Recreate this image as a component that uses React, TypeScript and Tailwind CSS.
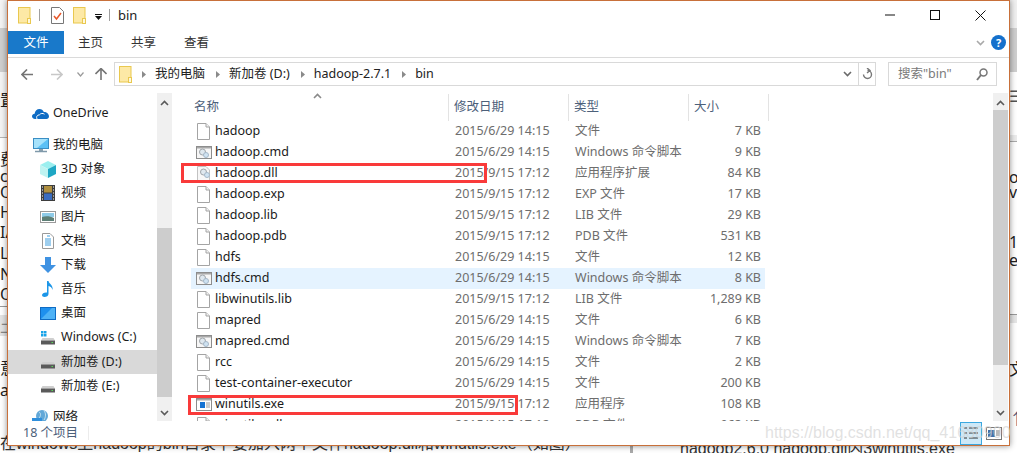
import type { ReactNode } from "react";

const files = [
  { name: "hadoop", date: "2015/6/29 14:15", type: "文件", size: "7 KB", icon: "file" },
  { name: "hadoop.cmd", date: "2015/6/29 14:15", type: "Windows 命令脚本", size: "9 KB", icon: "cmd" },
  { name: "hadoop.dll", date: "2015/9/15 17:12", type: "应用程序扩展", size: "84 KB", icon: "dll" },
  { name: "hadoop.exp", date: "2015/9/15 17:12", type: "EXP 文件", size: "17 KB", icon: "file" },
  { name: "hadoop.lib", date: "2015/9/15 17:12", type: "LIB 文件", size: "29 KB", icon: "file" },
  { name: "hadoop.pdb", date: "2015/9/15 17:12", type: "PDB 文件", size: "531 KB", icon: "file" },
  { name: "hdfs", date: "2015/6/29 14:15", type: "文件", size: "12 KB", icon: "file" },
  { name: "hdfs.cmd", date: "2015/6/29 14:15", type: "Windows 命令脚本", size: "8 KB", icon: "cmd" },
  { name: "libwinutils.lib", date: "2015/9/15 17:12", type: "LIB 文件", size: "1,289 KB", icon: "file" },
  { name: "mapred", date: "2015/6/29 14:15", type: "文件", size: "6 KB", icon: "file" },
  { name: "mapred.cmd", date: "2015/6/29 14:15", type: "Windows 命令脚本", size: "7 KB", icon: "cmd" },
  { name: "rcc", date: "2015/6/29 14:15", type: "文件", size: "2 KB", icon: "file" },
  { name: "test-container-executor", date: "2015/6/29 14:15", type: "文件", size: "200 KB", icon: "file" },
  { name: "winutils.exe", date: "2015/9/15 17:12", type: "应用程序", size: "108 KB", icon: "exe" },
  { name: "winutils.pdb", date: "2015/9/15 17:12", type: "PDB 文件", size: "963 KB", icon: "file" },
];

const leftStrip = [
  { h: 28, text: "", cls: "bg-[#f4f4f4]" },
  { h: 44, text: "", cls: "bg-[#cfcfcf]" },
  { h: 20, text: "", cls: "bg-[#f4f4f4]" },
  { h: 45, text: "置", cls: "bg-[#f4f4f4] items-start" },
  { h: 1, text: "", cls: "bg-[#b5b5b5]" },
  { h: 10, text: "", cls: "bg-white" },
  { h: 21, text: "费", cls: "" },
  { h: 13, text: "cc", cls: "" },
  { h: 20, text: "O", cls: "" },
  { h: 20, text: "H.", cls: "" },
  { h: 20, text: "IA", cls: "" },
  { h: 22, text: "LN", cls: "" },
  { h: 20, text: "N", cls: "" },
  { h: 20, text: "O", cls: "" },
  { h: 2, text: "", cls: "" },
  { h: 1, text: "", cls: "bg-[#9a9a9a]" },
  { h: 8, text: "", cls: "bg-white" },
  { h: 21, text: "土", cls: "bg-[#e3e3e3] text-[#888]" },
  { h: 22, text: "", cls: "" },
  { h: 20, text: "意", cls: "" },
  { h: 24, text: "ac", cls: "" },
  { h: 45, text: "", cls: "" },
];

const rightStrip = [
  { h: 28, text: "", cls: "bg-[#f0f0f0]" },
  { h: 44, text: "", cls: "bg-[#cfcfcf]" },
  { h: 15, text: "", cls: "" },
  { h: 18, text: "☰", cls: "text-[#555]" },
  { h: 30, text: "", cls: "" },
  { h: 6, text: "", cls: "bg-[#ececec]" },
  { h: 1, text: "", cls: "bg-[#aaa]" },
  { h: 28, text: "", cls: "" },
  { h: 14, text: "o", cls: "" },
  { h: 16, text: "v", cls: "" },
  { h: 34, text: "", cls: "" },
  { h: 16, text: "1.", cls: "" },
  { h: 20, text: "e", cls: "" },
  { h: 44, text: "", cls: "" },
  { h: 1, text: "", cls: "bg-[#999]" },
  { h: 8, text: "", cls: "bg-[#e6e6e6]" },
  { h: 36, text: "", cls: "" },
  { h: 20, text: "文", cls: "" },
  { h: 30, text: "", cls: "" },
  { h: 20, text: "↑", cls: "text-[#557]" },
];

function Folder() {
  return (
    <svg width="13" height="17" viewBox="0 0 13 17" className="shrink-0">
      <rect x="0.5" y="0.5" width="11.5" height="15.5" fill="#fde9a6" stroke="#e9c84f" />
      <rect x="9.5" y="11.5" width="3" height="5" fill="#fff8dc" stroke="#e9c84f" />
    </svg>
  );
}

function CheckDoc() {
  return (
    <svg width="13" height="17" viewBox="0 0 13 17" className="shrink-0">
      <path d="M0.5 0.5H8.5L12.5 4.5V16.5H0.5Z" fill="#fff" stroke="#777" />
      <path d="M3 9L5.5 12L10 6" fill="none" stroke="#e8582a" strokeWidth="1.5" />
    </svg>
  );
}

function PlainFile() {
  return (
    <svg width="13" height="17" viewBox="0 0 13 17" className="shrink-0">
      <path d="M0.5 0.5H9L12.5 4V16.5H0.5Z" fill="#fff" stroke="#a4a4a4" />
      <path d="M9 0.5V4H12.5" fill="#f2f2f2" stroke="#a4a4a4" />
    </svg>
  );
}

function Gears() {
  return (
    <g fill="#dfe8ef" stroke="#a0a5aa" strokeWidth="1">
      <circle cx="6.5" cy="6" r="3" />
      <circle cx="10" cy="9" r="2.5" fill="#cfe3f2" stroke="#a5b8c8" />
    </g>
  );
}

function CmdFile() {
  return (
    <svg width="16" height="13" viewBox="0 0 16 13" className="shrink-0">
      <rect x="0.5" y="0.5" width="15" height="12" fill="#f6f6f6" stroke="#8d8d8d" />
      <rect x="1" y="1" width="14" height="1.5" fill="#a8a8a8" />
      <Gears />
    </svg>
  );
}

function DllFile() {
  return (
    <svg width="13" height="15" viewBox="0 0 13 15" className="shrink-0">
      <path d="M0.5 0.5H9L12.5 4V14.5H0.5Z" fill="#f7f7f7" stroke="#c2c2c2" />
      <Gears />
    </svg>
  );
}

function ExeFile() {
  return (
    <svg width="16" height="13" viewBox="0 0 16 13" className="shrink-0">
      <rect x="0.5" y="0.5" width="15" height="12" fill="#fff" stroke="#8d8d8d" />
      <rect x="1" y="1" width="14" height="1.5" fill="#a8a8a8" />
      <rect x="4" y="4" width="5" height="6" fill="#1573d3" />
      <path d="M10 5H14M10 7H14M10 9H14" stroke="#9a9a9a" />
    </svg>
  );
}

function FileIcon({ kind }: { kind: string }) {
  if (kind === "cmd") return <CmdFile />;
  if (kind === "dll") return <DllFile />;
  if (kind === "exe") return <ExeFile />;
  return <PlainFile />;
}

function Cloud() {
  return (
    <svg width="17" height="11" viewBox="0 0 17 11">
      <path d="M3 11C1 11 0 9.5 0 8.300C0 6.800 1.200 5.800 2.600 5.800C3 3 5 1 7.500 1C9.500 1 11 2.200 11.800 4C14.500 3.800 17 6 17 8.300C17 10 15.800 11 14.500 11Z" fill="#0f6cc4" />
      <path d="M5 11C4 9 5 6.800 7.500 6.800C8.500 5.200 11 5 12.500 6.200" fill="none" stroke="#fff" />
    </svg>
  );
}

function Monitor() {
  return (
    <svg width="16" height="15" viewBox="0 0 16 15">
      <rect x="0.5" y="0.5" width="15" height="10" fill="#5cc0f5" stroke="#3a8ec4" />
      <path d="M1 1H15L4 10H1Z" fill="#a6e2fb" />
      <path d="M6 11H10V13H6Z" fill="#8ba0ad" />
      <path d="M2 13.500H14" stroke="#7f99aa" strokeWidth="1.500" />
    </svg>
  );
}

function Cube() {
  return (
    <svg width="16" height="17" viewBox="0 0 16 17">
      <path d="M8 0L16 4L8 8L0 4Z" fill="#9befef" />
      <path d="M0 4L8 8V17L0 13Z" fill="#bff3f1" />
      <path d="M16 4L8 8V17L16 13Z" fill="#1fa7c4" />
    </svg>
  );
}

function Film() {
  return (
    <svg width="14" height="16" viewBox="0 0 14 16">
      <rect width="14" height="16" fill="#3d3d3d" />
      <rect x="3" y="1" width="8" height="6.500" fill="#b09040" />
      <rect x="3" y="8.500" width="8" height="6.500" fill="#3a6cc0" />
      <path d="M1 2H2M1 5H2M1 8H2M1 11H2M1 14H2M12 2H13M12 5H13M12 8H13M12 11H13M12 14H13" stroke="#fff" />
    </svg>
  );
}

function Picture() {
  return (
    <svg width="16" height="12" viewBox="0 0 16 12">
      <rect x="0.5" y="0.5" width="15" height="11" fill="#fff" stroke="#9a9a9a" />
      <rect x="2" y="2" width="12" height="4" fill="#8ecbe8" />
      <path d="M2 6C6 4.500 10 5 14 7V10H2Z" fill="#5d7f76" />
    </svg>
  );
}

function Doc() {
  return (
    <svg width="12" height="16" viewBox="0 0 12 16">
      <path d="M0.5 0.500H8L11.500 4V15.500H0.500Z" fill="#fff" stroke="#9a9a9a" />
      <path d="M5 3H8M3 6H9M3 8H9M3 10H9M3 12H9" stroke="#3f9ede" />
    </svg>
  );
}

function DownArrow() {
  return (
    <svg width="16" height="16" viewBox="0 0 16 16">
      <path d="M5 0H11V8H16L8 16L0 8H5Z" fill="#3f92e2" />
    </svg>
  );
}

function Music() {
  return (
    <svg width="12" height="16" viewBox="0 0 12 16">
      <path d="M5 0H6.500C7 3 11.500 4 10.500 9C10 6.500 8.500 5.500 6.500 5V13C6.500 15 4.500 16 2.500 16C1 16 0 15 0 14C0 12.500 2.500 11 5 11.500Z" fill="#1c96e8" />
    </svg>
  );
}

function Desktop() {
  return (
    <svg width="16" height="13" viewBox="0 0 16 13">
      <rect x="0.5" y="0.5" width="15" height="12" fill="#1e90ee" stroke="#0f6cc4" />
      <path d="M1 12L12 1H15V12Z" fill="#4eb2f6" />
    </svg>
  );
}

function Drive({ windows }: { windows?: boolean }) {
  return (
    <svg width="14" height="14" viewBox="0 0 14 14">
      {windows && <path d="M0 0H2.500V2.500H0ZM3 0H5.500V2.500H3ZM0 3H2.500V5.500H0ZM3 3H5.500V5.500H3Z" fill="#18a3e8" />}
      <path d="M1.500 7H12.500L14 9.500H0Z" fill="#cfcfcf" />
      <rect y="9.500" width="14" height="4" fill="#5a5a5a" />
      <rect x="10.500" y="11" width="1.500" height="1" fill="#57d957" />
    </svg>
  );
}

function Globe() {
  return (
    <svg width="17" height="15" viewBox="0 0 17 15">
      <circle cx="10" cy="6" r="6" fill="#62a8d8" />
      <path d="M7 2C9 3 9 6 7 8M12 1C14 3 14 7 12 10" stroke="#c6e3f2" fill="none" />
      <rect y="8" width="10" height="7" fill="#2f8fdc" />
    </svg>
  );
}

function Chevron({ up, color = "#5a5a5a" }: { up?: boolean; color?: string }) {
  return (
    <svg width="9" height="6" viewBox="0 0 9 6">
      <path d={up ? "M1 5L4.500 1.500L8 5" : "M1 1L4.500 4.500L8 1"} fill="none" stroke={color} strokeWidth="1.600" />
    </svg>
  );
}

function Crumb() {
  return (
    <svg width="4" height="7" viewBox="0 0 4 7" className="ml-[11px] mr-[9px] shrink-0">
      <path d="M0 0L4 3.500L0 7Z" fill="#8a8a8a" />
    </svg>
  );
}

function ScrollBar({ thumbTop, thumbH, width }: { thumbTop: number; thumbH: number; width: string }) {
  return (
    <div className={`flex h-full shrink-0 flex-col bg-[#f0f0f0] ${width}`}>
      <div className="flex h-[17px] shrink-0 items-center justify-center pt-[2px]">
        <Chevron up />
      </div>
      <div className="relative flex-1">
        <div className="absolute inset-x-0 bg-[#cdcdcd]" style={{ top: thumbTop, height: thumbH }} />
      </div>
      <div className="flex h-[17px] shrink-0 items-center justify-center">
        <Chevron />
      </div>
    </div>
  );
}

function NavItem({ icon, label, indent, selected, h = "h-6" }: { icon: ReactNode; label: string; indent?: boolean; selected?: boolean; h?: string }) {
  return (
    <div className={`flex shrink-0 items-center ${h} ${selected ? "bg-[#d9d9d9]" : ""} ${indent ? "pl-[32px]" : "pl-[24px]"}`}>
      <span className={`flex h-full items-center justify-center ${indent ? "w-[16px]" : "w-[17px]"}`}>{icon}</span>
      <span className={`whitespace-nowrap text-[#1c1c1c] ${indent ? "ml-[5px]" : "ml-[4px]"}`}>{label}</span>
    </div>
  );
}

function Strip({ rows }: { rows: { h: number; text: string; cls: string }[] }) {
  return (
    <div className="w-[8px] overflow-hidden bg-white text-[16px] leading-none text-[#222]">
      {rows.map((r, i) => (
        <div key={i} className={`flex items-center overflow-hidden whitespace-nowrap ${r.cls}`} style={{ height: r.h }}>
          {r.text}
        </div>
      ))}
    </div>
  );
}

export default function App() {
  return (
    <div className="relative flex h-[453px] w-[1017px] justify-between overflow-hidden bg-white font-['Noto_Sans','Noto_Sans_CJK_SC',sans-serif] text-[12.5px] leading-none">
      <Strip rows={leftStrip} />
      <Strip rows={rightStrip} />

      {/* page text behind the window */}
      <div className="absolute bottom-[-1px] left-0 whitespace-nowrap font-['Liberation_Sans','Noto_Sans_CJK_SC',sans-serif] text-[16px] leading-[20px] text-[#333]">
        在windows上hadoop的bin目录下要加入两个文件hadoop.dll和winutils.exe（如图）
      </div>
      <div className="absolute bottom-[-6px] left-[680px] whitespace-nowrap font-['Liberation_Sans','Noto_Sans_CJK_SC',sans-serif] text-[16px] leading-[20px] text-[#333]">
        hadoop2.6.0 hadoop.dll内3winutils.exe
      </div>
      <div className="absolute bottom-0 left-[630px] h-[8px] w-[3px] bg-[#aaa]" />

      {/* explorer window */}
      <div className="absolute left-[7px] top-0 flex h-[446px] w-[1003px] flex-col border border-[#c8703a] bg-white shadow-[0_0_6px_rgba(0,0,0,0.45)]">
        {/* title bar */}
        <div className="flex h-[30px] shrink-0 items-center pb-[2px] pl-[10px]">
          <Folder />
          <div className="ml-[8px] h-[12px] w-px bg-[#a0a0a0]" />
          <div className="ml-[11px]"><CheckDoc /></div>
          <div className="ml-[9px]"><Folder /></div>
          <svg width="7" height="6" viewBox="0 0 7 6" className="ml-[9px] mt-[3px]">
            <path d="M0 2H7L3.500 6Z" fill="#111" />
            <rect width="7" height="1" fill="#111" />
          </svg>
          <div className="ml-[7px] h-[12px] w-px bg-[#a0a0a0]" />
          <span className="ml-[8px] text-[13px] text-[#222]">bin</span>
          <div className="ml-auto flex items-center">
            <svg width="10" height="2" viewBox="0 0 10 2" className="mr-[35px]"><rect width="10" height="1" y="0.500" fill="#111" /></svg>
            <svg width="10" height="10" viewBox="0 0 10 10" className="mr-[35px]"><rect x="0.500" y="0.500" width="9" height="9" fill="none" stroke="#111" /></svg>
            <svg width="11" height="11" viewBox="0 0 11 11" className="mr-[23px]"><path d="M0.500 0.500L10.500 10.500M10.500 0.500L0.500 10.500" stroke="#111" /></svg>
          </div>
        </div>

        {/* ribbon tabs */}
        <div className="flex h-[23px] shrink-0 items-center text-[#333]">
          <div className="flex h-full w-[56px] items-center justify-center bg-[#1979ca] pt-[1px] text-white">文件</div>
          <span className="ml-[14px] pt-[2px]">主页</span>
          <span className="ml-[28px] pt-[2px]">共享</span>
          <span className="ml-[28px] pt-[2px]">查看</span>
          <div className="ml-auto mr-[3px] flex items-center gap-[6px]">
            <Chevron color="#a9a9a9" />
            <div className="flex h-[15px] w-[15px] items-center justify-center rounded-full bg-[#1470cc] text-[11px] font-bold text-white">?</div>
          </div>
        </div>
        <div className="mt-[3px] h-px shrink-0 bg-[#dadada]" />

        {/* address row */}
        <div className="flex h-[32px] shrink-0 items-center">
          <svg width="12" height="11" viewBox="0 0 12 11" className="ml-[13px]"><path d="M6 0.500L1 5.500L6 10.500M1 5.500H12" fill="none" stroke="#757575" strokeWidth="1.600" /></svg>
          <svg width="12" height="11" viewBox="0 0 12 11" className="ml-[18px]"><path d="M6 0.500L11 5.500L6 10.500M11 5.500H0" fill="none" stroke="#c8c8c8" strokeWidth="1.600" /></svg>
          <svg width="7" height="5" viewBox="0 0 7 5" className="ml-[14px]"><path d="M0.500 0.500L3.500 4L6.500 0.500" fill="none" stroke="#9a9a9a" strokeWidth="1.200" /></svg>
          <svg width="12" height="12" viewBox="0 0 12 12" className="ml-[11px]"><path d="M0.500 6L6 0.500L11.500 6M6 0.500V12" fill="none" stroke="#757575" strokeWidth="1.600" /></svg>
          <div className="ml-[7px] flex h-[24px] w-[762px] items-center border border-[#d9d9d9] text-[#222]">
            <div className="ml-[4px]"><Folder /></div>
            <svg width="4" height="7" viewBox="0 0 4 7" className="ml-[10px] mr-[9px] shrink-0"><path d="M0 0L4 3.500L0 7Z" fill="#8a8a8a" /></svg>
            <span>我的电脑</span>
            <Crumb />
            <span>新加卷 (D:)</span>
            <Crumb />
            <span>hadoop-2.7.1</span>
            <Crumb />
            <span>bin</span>
            <div className="ml-auto mr-[3px]"><Chevron color="#6a6a6a" /></div>
            <div className="ml-[3px] flex h-full w-[17px] items-center justify-center border-l border-[#d9d9d9]">
              <svg width="11" height="12" viewBox="0 0 11 12"><path d="M5.500 2.500A4 4 0 1 1 1.500 6.500M5 0L8 2.500L5 5" fill="none" stroke="#777" strokeWidth="1.400" /></svg>
            </div>
          </div>
          <div className="ml-[12px] flex h-[24px] w-[109px] items-center justify-between border border-[#d9d9d9] pl-[9px] pr-[8px] text-[#7a7a7a]">
            <span>搜索"bin"</span>
            <svg width="12" height="13" viewBox="0 0 12 13"><circle cx="7.500" cy="4.500" r="3.500" fill="none" stroke="#777" strokeWidth="1.500" /><path d="M5 7L1 12" stroke="#777" strokeWidth="2" /></svg>
          </div>
        </div>

        {/* body */}
        <div className="flex h-[331px] shrink-0 pt-[3px]">
          <div className="flex w-[149px] shrink-0 flex-col overflow-hidden pt-[8px]">
            <NavItem icon={<Cloud />} label="OneDrive" />
            <div className="h-[8px] shrink-0" />
            <NavItem icon={<Monitor />} label="我的电脑" />
            <NavItem icon={<Cube />} label="3D 对象" indent />
            <NavItem icon={<Film />} label="视频" indent />
            <NavItem icon={<Picture />} label="图片" indent />
            <NavItem icon={<Doc />} label="文档" indent />
            <NavItem icon={<DownArrow />} label="下载" indent />
            <NavItem icon={<Music />} label="音乐" indent />
            <NavItem icon={<Desktop />} label="桌面" indent />
            <NavItem icon={<Drive windows />} label="Windows (C:)" indent h="h-[25px]" />
            <NavItem icon={<Drive />} label="新加卷 (D:)" indent selected />
            <NavItem icon={<Drive />} label="新加卷 (E:)" indent />
            <div className="h-[7px] shrink-0" />
            <NavItem icon={<Globe />} label="网络" />
          </div>
          <ScrollBar width="w-[15px]" thumbTop={118} thumbH={169} />

          <div className="relative ml-[3px] flex min-w-0 flex-1 flex-col overflow-hidden pt-[1px]">
            <div className="absolute left-[138px] top-[0px]"><Chevron up color="#8a8a8a" /></div>
            <div className="flex h-[27px] shrink-0 items-center text-[#4c607a]">
              <div className="flex h-full w-[274px] items-center border-r border-[#e3e3e3] pl-[19px]">名称</div>
              <div className="flex h-full w-[120px] items-center border-r border-[#e3e3e3] pl-[5px]">修改日期</div>
              <div className="flex h-full w-[120px] items-center border-r border-[#e3e3e3] pl-[5px]">类型</div>
              <div className="flex h-full w-[80px] items-center border-r border-[#e3e3e3] pl-[5px]">大小</div>
            </div>
            <div className="ml-[16px] flex flex-col">
              {files.map((f) => (
                <div key={f.name} className={`flex h-[21px] w-[574px] shrink-0 items-center ${f.name === "hdfs.cmd" ? "bg-[#e5f3ff]" : ""}`}>
                  <div className="flex w-[24px] justify-center pl-[1px]"><FileIcon kind={f.icon} /></div>
                  <div className="w-[240px] whitespace-nowrap text-[#1a1a1a]">{f.name}</div>
                  <div className="w-[120px] whitespace-nowrap text-[#6d6d6d]">{f.date}</div>
                  <div className="w-[120px] whitespace-nowrap text-[#6d6d6d]">{f.type}</div>
                  <div className="w-[66px] whitespace-nowrap text-right text-[#6d6d6d]">{f.size}</div>
                </div>
              ))}
            </div>
          </div>
          <ScrollBar width="w-[15px]" thumbTop={0} thumbH={255} />
          <div className="w-px shrink-0" />
        </div>

        {/* status bar */}
        <div className="flex flex-1 items-center pl-[15px] text-[#4c607a]">
          <span>18 个项目</span>
          <div className="ml-[10px] h-[14px] w-px bg-[#ececec]" />
          <div className="ml-auto mr-[5px] flex items-center gap-[2px]">
            <div className="flex h-[23px] w-[22px] items-center justify-center border border-[#3ba8e0] bg-[#cde8f7]">
              <svg width="14" height="12" viewBox="0 0 14 12"><path d="M0 1H3M0 6H3M0 11H3M5 1H14M5 6H14M5 11H14" stroke="#333" /></svg>
            </div>
            <div className="flex h-[23px] w-[20px] items-center justify-center">
              <svg width="16" height="13" viewBox="0 0 16 13"><rect x="0.500" y="0.500" width="15" height="12" fill="#fff" stroke="#777" /><rect x="2" y="3" width="7" height="7" fill="#3f6fa8" /><path d="M10 4H14M10 6H14M10 8H14" stroke="#777" /></svg>
            </div>
          </div>
        </div>
      </div>

      {/* red annotation boxes */}
      <div className="absolute left-[181px] top-[163px] h-[20px] w-[306px] border-[3px] border-[#f93a3a]" />
      <div className="absolute left-[188px] top-[395px] h-[20px] w-[330px] border-[3px] border-[#f93a3a]" />
      <div className="absolute left-[765px] top-[421px] whitespace-nowrap font-['Liberation_Sans',sans-serif] text-[16px] leading-[24px] text-[#d4d4d4]/70">
        https://blog.csdn.net/qq_41680900
      </div>
    </div>
  );
}
